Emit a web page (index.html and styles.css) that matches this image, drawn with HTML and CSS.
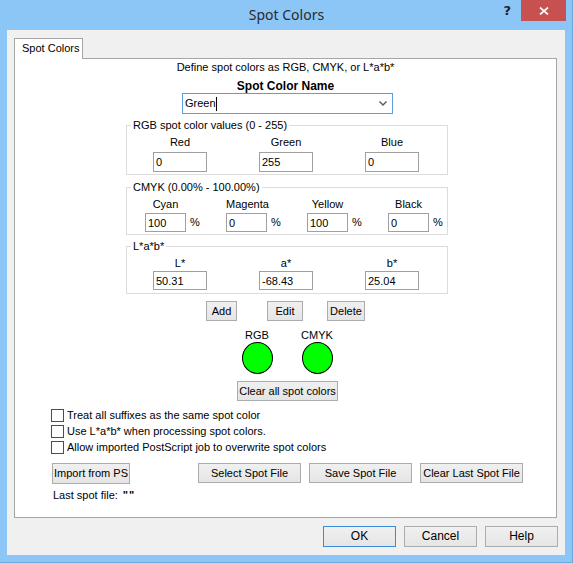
FILE: index.html
```html
<!DOCTYPE html>
<html>
<head>
<meta charset="utf-8">
<title>Spot Colors</title>
<link rel="stylesheet" href="styles.css">
</head>
<body>
<div class="window">
  <div class="titlebar">
    <div></div>
    <div class="title">Spot Colors</div>
    <div class="caption-btns">
      <span class="help">?</span>
      <span class="close"><svg width="10" height="8" viewBox="0 0 10 8"><path d="M1 0.5 L9 7.5 M9 0.5 L1 7.5" stroke="#fff" stroke-width="1.7" fill="none"/></svg></span>
    </div>
  </div>
  <div class="client">
    <div class="tab">Spot Colors</div>
    <div class="panel">
      <div class="intro">Define spot colors as RGB, CMYK, or L*a*b*</div>
      <div class="name-label">Spot Color Name</div>
      <div class="combo">
        <span class="combo-text">Green</span><span class="caret"></span>
        <svg class="chev" width="8" height="5" viewBox="0 0 8 5"><path d="M0.5 0.5 L4 4 L7.5 0.5" stroke="#606060" stroke-width="1.5" fill="none"/></svg>
      </div>

      <fieldset class="group g-rgb">
        <legend>RGB spot color values (0 - 255)</legend>
        <div class="cols3">
          <div class="col"><div class="lbl">Red</div><input class="num w54" value="0"></div>
          <div class="col"><div class="lbl">Green</div><input class="num w54" value="255"></div>
          <div class="col"><div class="lbl">Blue</div><input class="num w54" value="0"></div>
        </div>
      </fieldset>

      <fieldset class="group g-cmyk">
        <legend>CMYK (0.00% - 100.00%)</legend>
        <div class="cols4">
          <div class="col"><div class="lbl w41">Cyan</div><div class="pct-row"><input class="num w41" value="100"><span class="pct">%</span></div></div>
          <div class="col"><div class="lbl w41">Magenta</div><div class="pct-row"><input class="num w41" value="0"><span class="pct">%</span></div></div>
          <div class="col"><div class="lbl w41">Yellow</div><div class="pct-row"><input class="num w41" value="100"><span class="pct">%</span></div></div>
          <div class="col"><div class="lbl w41">Black</div><div class="pct-row"><input class="num w41" value="0"><span class="pct">%</span></div></div>
        </div>
      </fieldset>

      <fieldset class="group g-lab">
        <legend>L*a*b*</legend>
        <div class="cols3">
          <div class="col"><div class="lbl">L*</div><input class="num w54" value="50.31"></div>
          <div class="col"><div class="lbl">a*</div><input class="num w54" value="-68.43"></div>
          <div class="col"><div class="lbl">b*</div><input class="num w54" value="25.04"></div>
        </div>
      </fieldset>

      <div class="actions">
        <button class="btn b-add">Add</button>
        <button class="btn b-edit">Edit</button>
        <button class="btn b-del">Delete</button>
      </div>

      <div class="swatches">
        <div class="swatch"><div class="sw-lbl">RGB</div><div class="dot"></div></div>
        <div class="swatch"><div class="sw-lbl">CMYK</div><div class="dot"></div></div>
      </div>

      <div class="clear-row"><button class="btn b-clear">Clear all spot colors</button></div>

      <div class="checks">
        <div class="check"><span class="box"></span>Treat all suffixes as the same spot color</div>
        <div class="check"><span class="box"></span>Use L*a*b* when processing spot colors.</div>
        <div class="check"><span class="box"></span>Allow imported PostScript job to overwrite spot colors</div>
      </div>

      <div class="file-row">
        <button class="btn b-import">Import from PS</button>
        <button class="btn b-file">Select Spot File</button>
        <button class="btn b-file">Save Spot File</button>
        <button class="btn b-file">Clear Last Spot File</button>
      </div>

      <div class="last-file"><span>Last spot file:</span><span class="quote">""</span></div>
    </div>
    <div class="footer">
      <button class="btn b-dlg b-default">OK</button>
      <button class="btn b-dlg">Cancel</button>
      <button class="btn b-dlg">Help</button>
    </div>
  </div>
</div>
</body>
</html>
```

FILE: styles.css
```css
* { box-sizing: border-box; }
html, body { margin: 0; padding: 0; }
body {
  font-family: "Liberation Sans", Arial, sans-serif;
  font-size: 11px;
  line-height: 13px;
  color: #000;
  background: #fff;
}
.window {
  width: 573px;
  height: 563px;
  background: #8cc6f7;
  border-right: 1px solid #6ea7dc;
  border-bottom: 1px solid #6ea7dc;
  display: flex;
  flex-direction: column;
}
.titlebar {
  height: 30px;
  display: grid;
  grid-template-columns: 1fr auto 1fr;
  align-items: start;
}
.title {
  font-family: "Noto Sans", "Open Sans", sans-serif;
  font-size: 14px;
  line-height: 30px;
  color: #2a2a2a;
  padding-left: 1px;
}
.caption-btns {
  display: flex;
  justify-content: flex-end;
  align-items: flex-start;
  padding-right: 6px;
}
.help {
  font-family: "DejaVu Sans", sans-serif;
  font-weight: bold;
  font-size: 13px;
  line-height: 13px;
  color: #222;
  margin-top: 4px;
  margin-right: 10px;
}
.close {
  width: 45px;
  height: 21px;
  background: #c75050;
  display: flex;
  align-items: center;
  justify-content: center;
}
.close svg { display: block; }
.client {
  margin: 0 7px 0 7px;
  width: 558px;
  height: 525px;
  background: #f0f0f0;
  padding: 8px 0 0 7px;
}
.tab {
  width: 69px;
  height: 21px;
  background: #fff;
  border: 1px solid #a6a6a6;
  border-bottom: none;
  margin-bottom: -1px;
  position: relative;
  z-index: 1;
  padding: 3px 0 0 7px;
}
.panel {
  width: 543px;
  height: 460px;
  background: #fff;
  border: 1px solid #a6a6a6;
  display: flex;
  flex-direction: column;
}
.intro {
  margin-top: 2px;
  text-align: center;
}
.name-label {
  margin-top: 6px;
  text-align: center;
  font-weight: bold;
  font-size: 12px;
}
.combo {
  align-self: flex-start;
  margin-left: 167px;
  width: 211px;
  height: 21px;
  border: 1px solid #5a9fe0;
  display: flex;
  align-items: center;
  padding-left: 2px;
}
.combo-text { line-height: 13px; }
.caret {
  width: 1px;
  height: 14px;
  background: #000;
}
.chev { margin-left: auto; margin-right: 5px; }

.group {
  margin: 5px 0 0 111px;
  width: 322px;
  padding: 0;
  border: 1px solid #dcdcdc;
  min-width: 0;
}
.group legend {
  padding: 0 2px;
  margin-left: 4px;
  line-height: 13px;
}
.g-rgb { padding-bottom: 2px; }
.g-cmyk { padding-bottom: 2px; margin-top: 6px; }
.g-lab { padding-bottom: 3px; }

.cols3 {
  display: grid;
  grid-template-columns: 54px 54px 54px;
  column-gap: 52px;
  padding-left: 26px;
}
.cols4 {
  display: grid;
  grid-template-columns: repeat(4, 81px);
  padding-left: 18px;
}
.col { display: flex; flex-direction: column; align-items: flex-start; }
.lbl { width: 54px; text-align: center; }
.lbl.w41 { width: 41px; }
.g-rgb .lbl { margin-top: 4px; margin-bottom: 3px; }
.g-cmyk .lbl { margin-top: 4px; margin-bottom: 2px; }
.g-lab .lbl { margin-top: 4px; margin-bottom: 1px; }

.num {
  font: inherit;
  color: #000;
  height: 20px;
  border: 1px solid #a0a0a0;
  padding: 0 2px;
  margin: 0;
  background: #fff;
  outline: none;
}
.w54 { width: 54px; }
.w41 { width: 41px; }
.g-cmyk .num, .g-lab .num { height: 19px; }
.pct-row { display: flex; align-items: center; }
.pct { margin-left: 4px; }

.btn {
  font: inherit;
  color: #000;
  background: linear-gradient(#f0f0f0, #e5e5e5);
  border: 1px solid #acacac;
  height: 20px;
  padding: 0;
  margin: 0;
  text-align: center;
}
.actions {
  display: flex;
  margin: 7px 0 0 191px;
}
.b-add { width: 31px; margin-right: 30px; }
.b-edit { width: 36px; margin-right: 24px; }
.b-del { width: 38px; }

.swatches {
  display: flex;
  margin: 8px 0 0 227px;
  gap: 30px;
}
.swatch { display: flex; flex-direction: column; align-items: center; width: 30px; }
.sw-lbl { white-space: nowrap; }
.dot {
  width: 31px;
  height: 32px;
  border-radius: 50%;
  background: #00ff00;
  border: 1px solid #000;
}
.clear-row {
  margin: 7px 0 0 222px;
  display: flex;
}
.b-clear { width: 101px; }

.checks {
  margin: 6px 0 0 36px;
}
.check {
  height: 16px;
  display: flex;
  align-items: center;
}
.box {
  width: 13px;
  height: 13px;
  border: 1px solid #4d4d4d;
  background: #fff;
  margin-right: 3px;
}
.file-row {
  display: flex;
  margin: 8px 0 0 37px;
}
.b-import { width: 78px; margin-right: 68px; height: 21px; }
.b-file { width: 103px; margin-right: 8px; }
.last-file {
  margin: 5px 0 0 38px;
  display: flex;
}
.quote { margin-left: 5px; font-weight: bold; letter-spacing: 1px; }

.footer {
  display: flex;
  justify-content: flex-end;
  gap: 8px;
  padding-right: 7px;
  margin-top: 8px;
}
.b-dlg { width: 73px; height: 21px; font-size: 12px; }
.b-default { border-color: #3c8ad8; }
```
